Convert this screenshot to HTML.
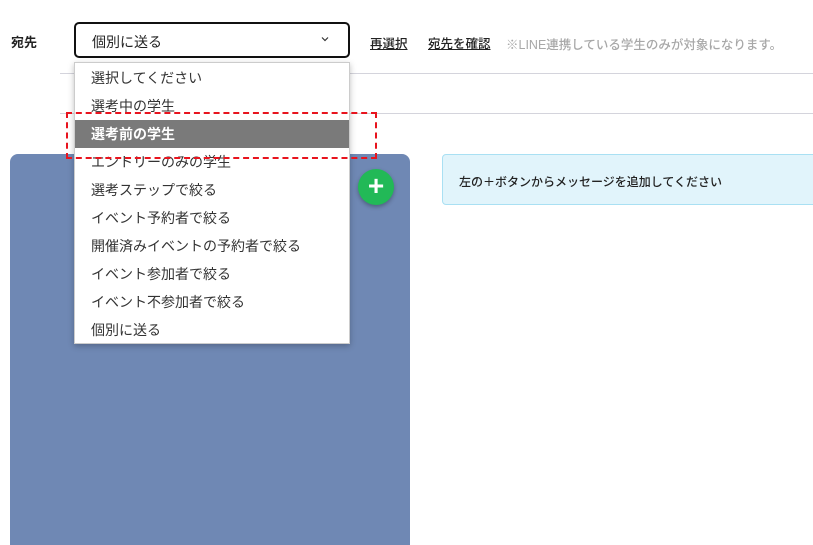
<!DOCTYPE html>
<html><head><meta charset="utf-8"><style>
*{margin:0;padding:0;box-sizing:border-box}
html,body{width:813px;height:545px;overflow:hidden}
body{background:#fff;position:relative;font-family:"Liberation Sans","Noto Sans CJK JP",sans-serif;color:#333}
.abs{position:absolute}
.lbl{left:11px;top:32px;font-size:13px;font-weight:bold;color:#222}
.sel{left:74px;top:22px;width:276px;height:36px;border:2px solid #111;border-radius:5px;font-size:14px;padding:8px 0 0 16px;color:#222}
.lnk{font-size:12.5px;text-decoration:underline;color:#222;top:33px;font-weight:500}
.note{left:506px;top:34px;font-size:12.5px;color:#a8a8a8;font-weight:500}
.hr{height:1px;background:#d4d4dc;left:60px;right:0}
.panel{left:10px;top:154px;width:400px;height:391px;background:#6f88b4;border-radius:8px 8px 0 0}
.plus{left:358px;top:169px;width:36px;height:36px;border-radius:50%;background:#22b957;box-shadow:0 2px 4px rgba(0,0,0,.3);color:#fff;font-size:28px;line-height:34px;text-align:center;font-weight:bold}
.info{left:442px;top:154px;width:380px;height:51px;background:#e1f4fb;border:1px solid #a9e0f3;border-radius:4px;font-size:12px;padding:18px 0 0 16px;color:#222;font-weight:500}
.dd{left:74px;top:62px;width:276px;height:282px;background:#fff;border:1px solid #ccc;box-shadow:0 2px 6px rgba(0,0,0,.25)}
.it{position:absolute;left:0;width:274px;height:28px;font-size:14px;line-height:28px;padding-left:16px;color:#333}
.hi{background:#7a7a7a;color:#fff;font-weight:bold}
.red{left:66px;top:112px;width:311px;height:47px;border:2px dashed #e8141e}
</style></head><body>
<div class="abs lbl">宛先</div>
<div class="abs sel">個別に送る<svg class="abs" style="left:244px;top:11px" width="10" height="8" viewBox="0 0 10 8"><path d="M2 2.5l3 3 3-3" stroke="#333" stroke-width="1.2" fill="none"/></svg></div>
<div class="abs lnk" style="left:370px">再選択</div>
<div class="abs lnk" style="left:428px">宛先を確認</div>
<div class="abs note">※LINE連携している学生のみが対象になります。</div>
<div class="abs hr" style="top:73px"></div>
<div class="abs hr" style="top:113px"></div>
<div class="abs panel"></div>
<div class="abs plus">+</div>
<div class="abs info">左の＋ボタンからメッセージを追加してください</div>
<div class="abs dd">
<div class="it" style="top:1px">選択してください</div>
<div class="it" style="top:29px">選考中の学生</div>
<div class="it hi" style="top:57px">選考前の学生</div>
<div class="it" style="top:85px">エントリーのみの学生</div>
<div class="it" style="top:113px">選考ステップで絞る</div>
<div class="it" style="top:141px">イベント予約者で絞る</div>
<div class="it" style="top:169px">開催済みイベントの予約者で絞る</div>
<div class="it" style="top:197px">イベント参加者で絞る</div>
<div class="it" style="top:225px">イベント不参加者で絞る</div>
<div class="it" style="top:253px">個別に送る</div>
</div>
<div class="abs red"></div>
</body></html>
